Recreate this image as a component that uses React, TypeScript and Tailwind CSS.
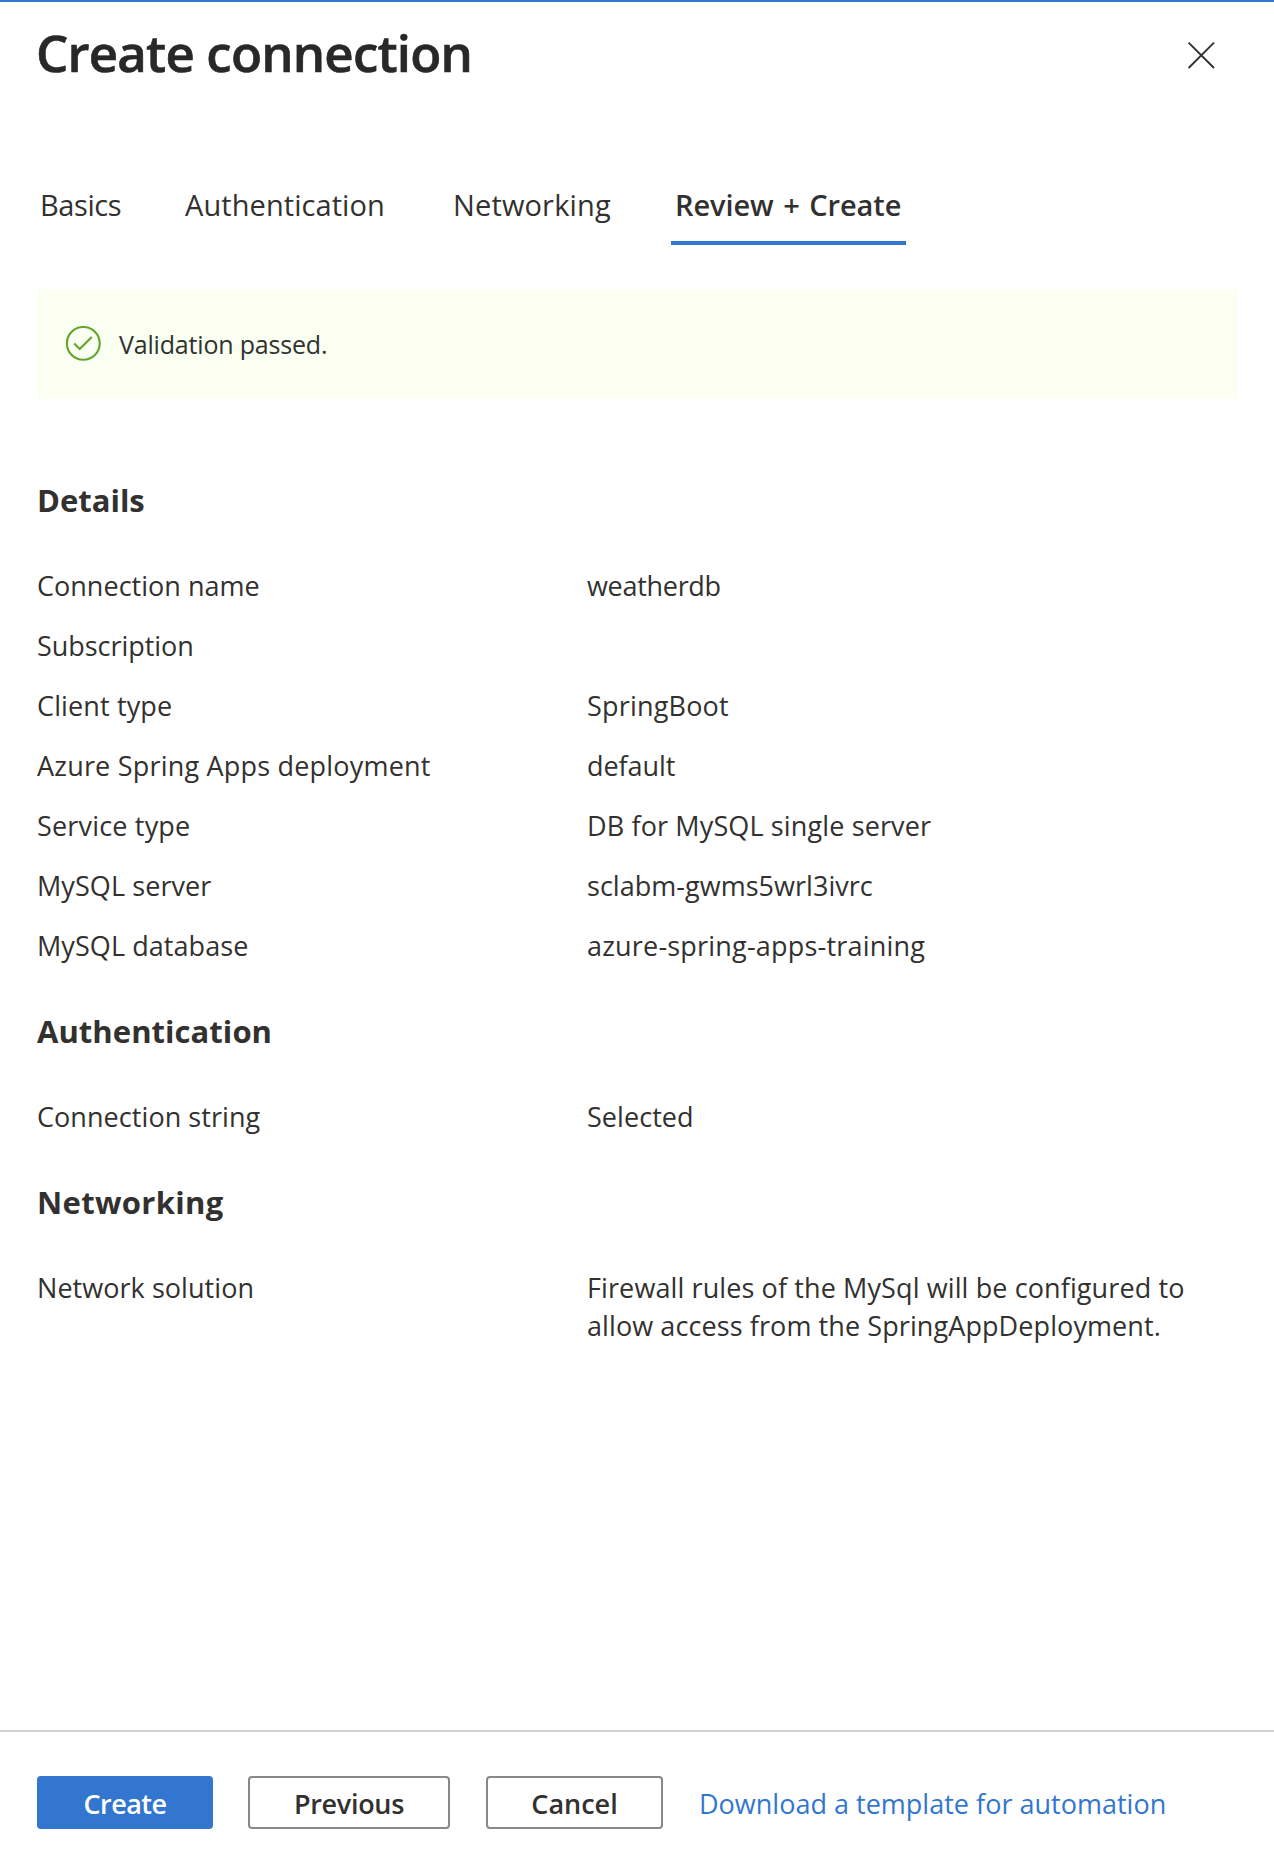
type Row = { label: string; labelClass: string; value?: string[]; valueClass?: string[] };

const details: Row[] = [
  { label: "Connection name", labelClass: "tracking-[0.02px]", value: ["weatherdb"], valueClass: ["tracking-[-0.3px]"] },
  { label: "Subscription", labelClass: "tracking-[-0.05px]" },
  { label: "Client type", labelClass: "tracking-[0.13px]", value: ["SpringBoot"], valueClass: ["tracking-[0.19px]"] },
  { label: "Azure Spring Apps deployment", labelClass: "tracking-[0.2px]", value: ["default"], valueClass: ["tracking-[-0.05px]"] },
  { label: "Service type", labelClass: "tracking-[0.18px]", value: ["DB for MySQL single server"], valueClass: ["tracking-[0.13px]"] },
  { label: "MySQL server", labelClass: "tracking-[0.08px]", value: ["sclabm-gwms5wrl3ivrc"], valueClass: ["tracking-[0.03px]"] },
  { label: "MySQL database", labelClass: "tracking-[0.07px]", value: ["azure-spring-apps-training"], valueClass: ["tracking-[0.2px]"] },
];

const authentication: Row[] = [
  { label: "Connection string", labelClass: "tracking-[0.06px]", value: ["Selected"], valueClass: ["tracking-[0.05px]"] },
];

const networking: Row[] = [
  {
    label: "Network solution",
    labelClass: "tracking-[0.05px]",
    value: ["Firewall rules of the MySql will be configured to", "allow access from the SpringAppDeployment."],
    valueClass: ["tracking-[0.11px]", "tracking-[0.09px]"],
  },
];

function Section({ title, titleClass, rows }: { title: string; titleClass: string; rows: Row[] }) {
  return (
    <section className="mt-[33px]">
      <h2 className={`mb-[34px] text-[31px] font-bold leading-[44px] ${titleClass}`}>{title}</h2>
      <dl>
        {rows.map((row) => (
          <div key={row.label} className="grid grid-cols-[550px_1fr] py-[11px] text-[27px] leading-[38px]">
            <dt className={row.labelClass}>{row.label}</dt>
            <dd className="whitespace-nowrap">
              {row.value?.map((line, i) => (
                <span key={line} className={`block ${row.valueClass?.[i] ?? ""}`}>
                  {line}
                </span>
              ))}
            </dd>
          </div>
        ))}
      </dl>
    </section>
  );
}

export default function App() {
  return (
    <div className="flex h-[1864px] w-[1274px] flex-col border-t-2 border-[#3276cf] bg-white font-['Open_Sans',sans-serif] text-[#323130]">
      <header className="flex items-start justify-between pl-[36px] pr-[59px] pt-[20px]">
        <h1 className="text-[51px] font-semibold leading-[60px] tracking-[-0.82px] text-[#292827] [-webkit-text-stroke:0.6px_#292827]">
          Create connection
        </h1>
        <button aria-label="Close" className="mt-[19px]">
          <svg width="28" height="28" viewBox="0 0 28 28" fill="none" stroke="#323130" strokeWidth="1.9">
            <path d="M1.6 1.6 27 27M27 1.6 1.6 27" />
          </svg>
        </button>
      </header>

      <nav className="mt-[103px] flex h-[60px] items-start pl-[40px] text-[29px] leading-[40px]">
        <button className="w-[145px] text-left tracking-[-0.42px]">Basics</button>
        <button className="w-[268px] text-left tracking-[0.07px]">Authentication</button>
        <button className="w-[218px] text-left tracking-[0.15px]">Networking</button>
        <button className="flex h-[60px] w-[235px] items-start border-b-4 border-[#3276cf] pl-[4px] font-semibold tracking-[-0.1px] [word-spacing:2.2px]">
          Review + Create
        </button>
      </nav>

      <main className="mt-[44px] px-[37px]">
        <div className="mb-[79px] flex h-[110px] items-center bg-[#f9fff1] pl-[28px]">
          <svg className="-mt-px" width="36" height="36" viewBox="0 0 36 36" fill="none" stroke="#66a32b" strokeWidth="2.1">
            <circle cx="18.3" cy="17.4" r="16.4" />
            <path d="M9.2 17.6 14.7 23.1 26.8 11" />
          </svg>
          <span className="ml-[18px] pt-[2px] text-[25px] tracking-[-0.18px]">Validation passed.</span>
        </div>
        <Section title="Details" titleClass="" rows={details} />
        <Section title="Authentication" titleClass="tracking-[0.05px]" rows={authentication} />
        <Section title="Networking" titleClass="tracking-[0.32px]" rows={networking} />
      </main>

      <footer className="mt-auto flex h-[134px] items-start border-t-2 border-[#d2d2d2] pl-[37px] pt-[44px] text-[27px]">
        <button className="h-[53px] w-[176px] rounded-[4px] bg-[#3276cf] pt-1 font-semibold tracking-[-0.5px] text-white">Create</button>
        <button className="ml-[35px] h-[53px] w-[202px] rounded-[4px] border-2 border-[#8a8886] pt-1 font-semibold tracking-[-0.3px]">
          Previous
        </button>
        <button className="ml-[36px] h-[53px] w-[177px] rounded-[4px] border-2 border-[#8a8886] pt-1 font-semibold">Cancel</button>
        <a className="ml-[36px] leading-[55px] tracking-[0.01px] text-[#3276cf]">Download a template for automation</a>
      </footer>
    </div>
  );
}
